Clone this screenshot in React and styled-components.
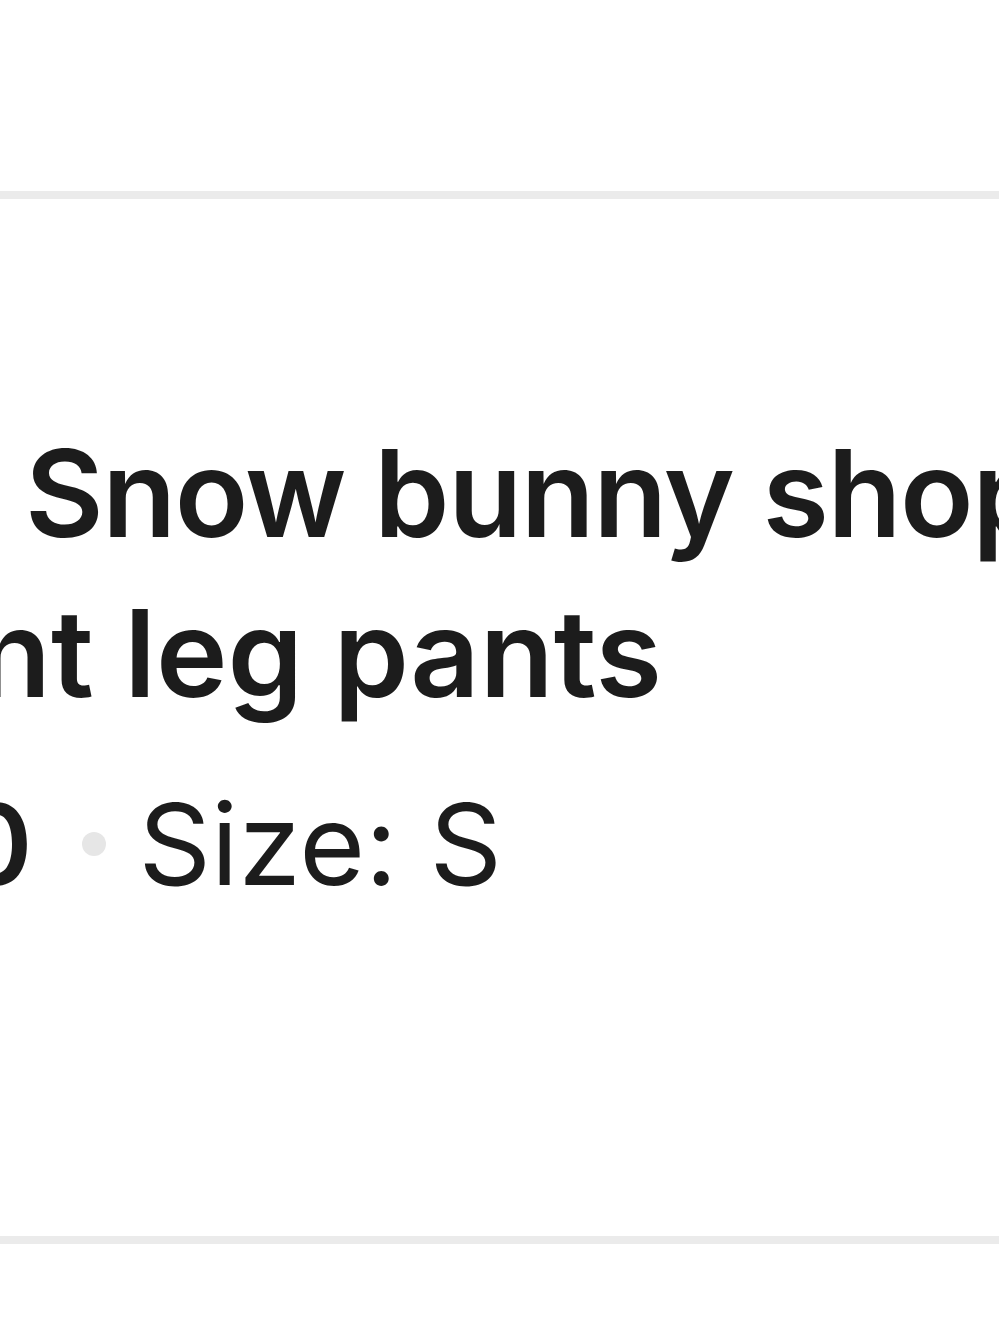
import React from "react";
import styled, { createGlobalStyle } from "styled-components";

const Global = createGlobalStyle`
  html, body { margin: 0; padding: 0; background: #ffffff; }
  body { font-family: Inter, "Noto Sans", "Liberation Sans", sans-serif; color: #1f1f1f; }
`;

const Page = styled.div`
  width: 999px;
  height: 1333px;
  overflow: hidden;
  background: #fff;
  padding-top: 191px;
  box-sizing: border-box;
`;

const Divider = styled.div`
  height: 8px;
  background: #ebebeb;
`;

const ItemRow = styled.div`
  height: 1037px;
  display: flex;
  flex-direction: column;
  justify-content: flex-start;
  padding-top: 214px;
  box-sizing: border-box;
  overflow: hidden;
`;

const TitleLine = styled.div`
  font-size: 121px;
  font-weight: 600;
  line-height: 160px;
  letter-spacing: ${(p) => p.$tracking}px;
  white-space: nowrap;
  color: #1c1c1c;
  margin-left: ${(p) => p.$shift}px;
`;

const Meta = styled.div`
  display: flex;
  align-items: center;
  margin-top: 31px;
  margin-left: ${(p) => p.$shift}px;
  white-space: nowrap;
  font-size: 113px;
  line-height: 160px;
  color: #1c1c1c;
`;

const Price = styled.span`
  font-weight: 600;
`;

const Bullet = styled.span`
  width: 24px;
  height: 24px;
  margin: 0 33px 0 49px;
  border-radius: 50%;
  background: #e6e6e6;
  flex: none;
`;

const Size = styled.span`
  font-weight: 400;
`;

export default function App() {
  return (
    <>
      <Global />
      <Page>
        <Divider />
        <ItemRow>
          <TitleLine $shift={25} $tracking={-1.5}>Snow bunny shopping straight</TitleLine>
          <TitleLine $shift={-23} $tracking={0}>nt leg pants</TitleLine>
          <Meta $shift={-42}>
            <Price>0</Price>
            <Bullet />
            <Size>Size: S</Size>
          </Meta>
        </ItemRow>
        <Divider />
      </Page>
    </>
  );
}
